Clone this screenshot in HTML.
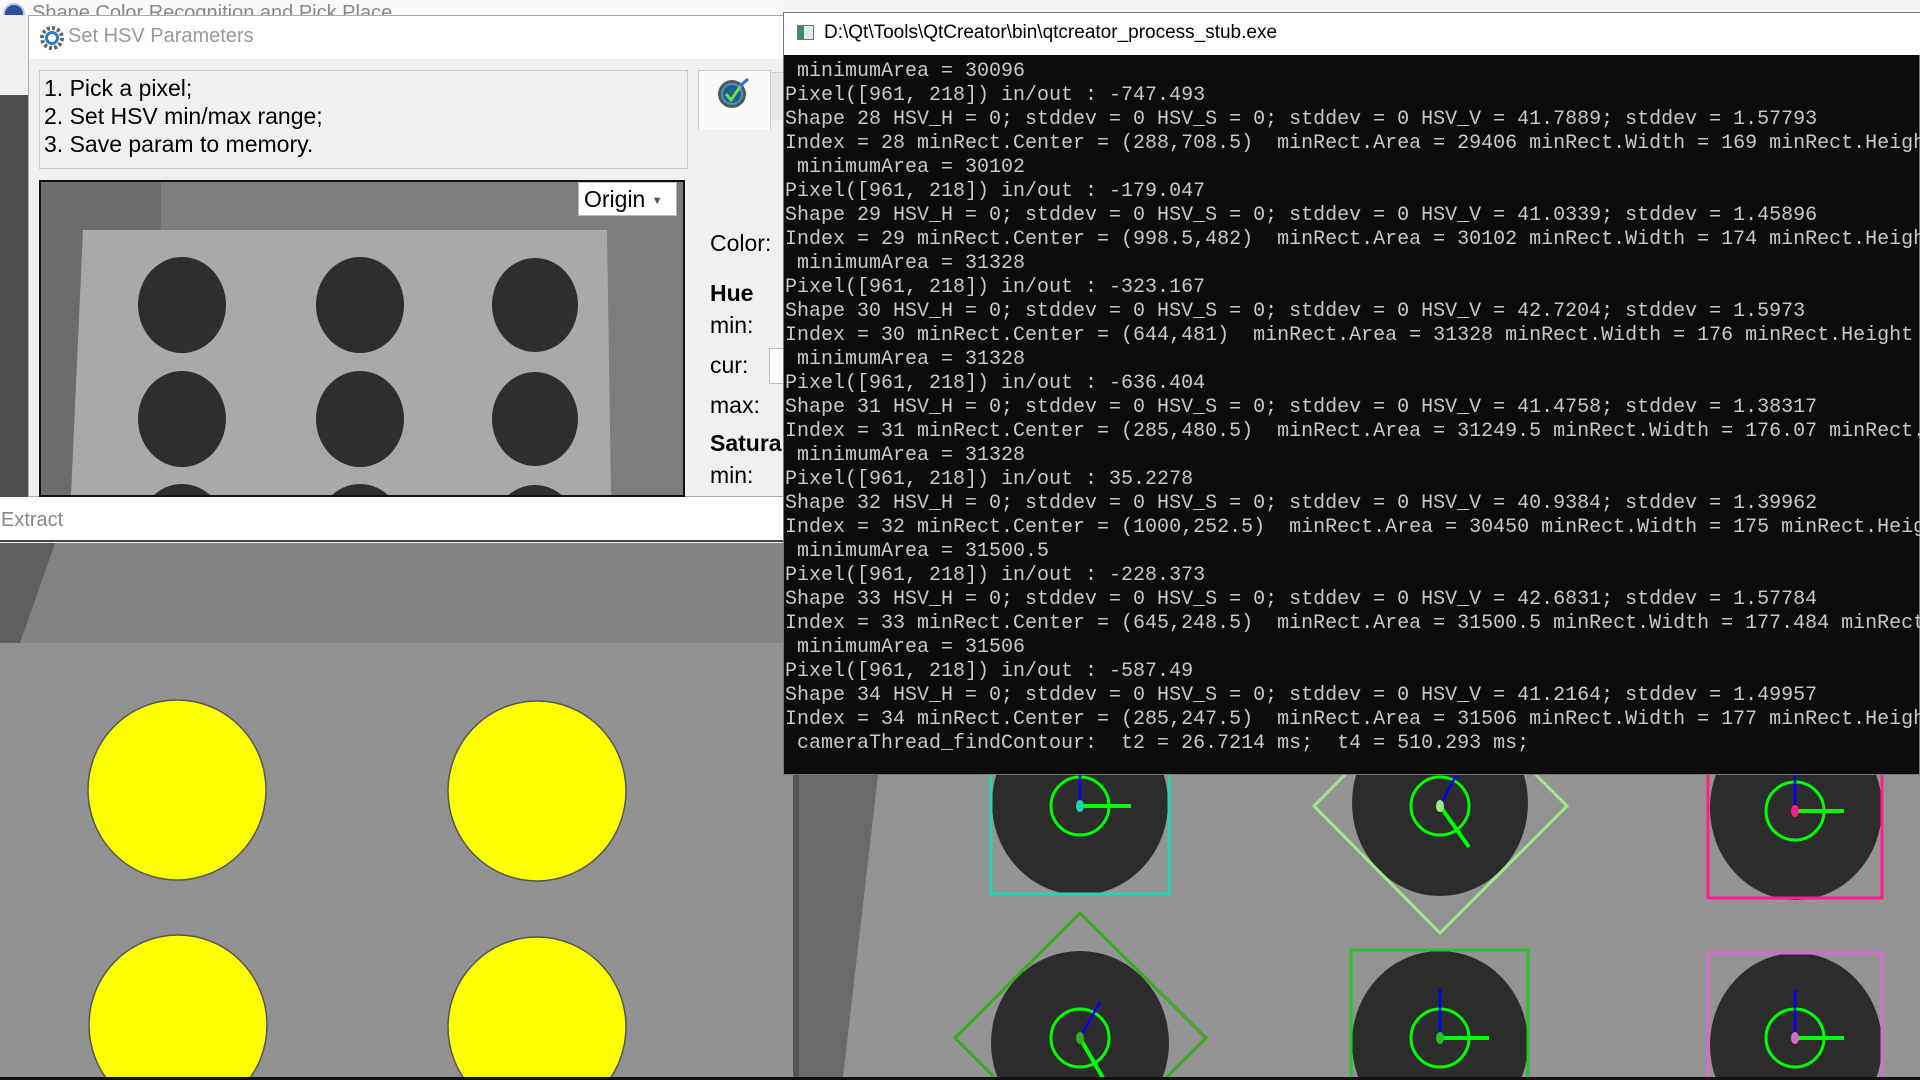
<!DOCTYPE html>
<html><head><meta charset="utf-8"><style>
*{margin:0;padding:0;box-sizing:border-box}
html,body{width:1920px;height:1080px;overflow:hidden}
body{position:relative;background:#f3f3f3;font-family:"Liberation Sans",sans-serif}
.abs{position:absolute}
.con{font-family:"Liberation Mono","Noto Sans CJK SC",monospace;font-size:20px;line-height:24px;color:#c8c8c8;white-space:pre}
</style></head><body>
<div class="abs" style="left:0;top:0;width:1920px;height:15px;background:#fafafa;overflow:hidden">
<div class="abs" style="left:3px;top:3px;width:22px;height:22px;border-radius:50%;background:#2b4f9e;border:2px solid #b9c7e8"></div>
<div class="abs" style="left:32px;top:3px;font-size:20px;color:#888;line-height:20px">Shape Color Recognition and Pick Place</div>
</div>
<div class="abs" style="left:0;top:15px;width:28px;height:80px;background:#f0f0f0"></div>
<div class="abs" style="left:0;top:95px;width:28px;height:402px;background:#4e4e4e"></div>

<div class="abs" style="left:28px;top:15px;width:756px;height:482px;background:#f0f0f0;border:1px solid #aaa;border-right:none"></div>
<div class="abs" style="left:29px;top:16px;width:755px;height:43px;background:#fff"></div>
<svg class="abs" style="left:40px;top:26px" width="24" height="24" viewBox="0 0 24 24"><circle cx="12" cy="12" r="10" fill="none" stroke="#666" stroke-width="4" stroke-dasharray="3 2.2"/><circle cx="12" cy="12" r="7" fill="#2a7ed0"/><circle cx="12" cy="12" r="4" fill="#fff"/></svg>
<div class="abs" style="left:68px;top:25px;font-size:20px;color:#999">Set HSV Parameters</div>
<div class="abs" style="left:39px;top:70px;width:649px;height:99px;border:1px solid #c8c8c8;background:#f0f0f0"></div>
<div class="abs" style="left:44px;top:74px;font-size:23px;line-height:28px;color:#000">1. Pick a pixel;<br>2. Set HSV min/max range;<br>3. Save param to memory.</div>
<div class="abs" style="left:39px;top:180px;width:646px;height:317px;border:2px solid #111;overflow:hidden;background:#6f6f6f">
<svg width="646" height="313" style="display:block">
<rect x="0" y="0" width="646" height="313" fill="#6c6c6c"/>
<rect x="120" y="0" width="526" height="313" fill="#7d7d7d"/>
<polygon points="42,48 566,48 570,313 30,313" fill="#a9a9a9"/>
<g fill="#2e2e2e">
<ellipse cx="141" cy="123" rx="44" ry="48"/><ellipse cx="319" cy="123" rx="44" ry="48"/><ellipse cx="494" cy="123" rx="43" ry="47"/>
<ellipse cx="141" cy="237" rx="44" ry="48"/><ellipse cx="319" cy="237" rx="44" ry="48"/><ellipse cx="494" cy="237" rx="43" ry="47"/>
<ellipse cx="141" cy="350" rx="44" ry="48"/><ellipse cx="319" cy="350" rx="44" ry="48"/><ellipse cx="494" cy="350" rx="43" ry="47"/>
</g></svg></div>
<div class="abs" style="left:578px;top:182px;width:99px;height:34px;background:#fff;border:1px solid #bbb;font-size:23px;line-height:32px;padding-left:5px">Origin <span style="font-size:11px;color:#555;vertical-align:middle">▼</span></div>
<div class="abs" style="left:698px;top:70px;width:73px;height:60px;background:#fafafa;border:1px solid #ccc;border-bottom:none"></div>
<div class="abs" style="left:771px;top:72px;width:13px;height:48px;background:#e8e8e8;border-top:1px solid #ccc"></div>
<svg class="abs" style="left:716px;top:76px" width="36" height="34" viewBox="0 0 36 34"><circle cx="16" cy="18" r="14" fill="#555"/><circle cx="16" cy="18" r="10" fill="#1e5f8a" stroke="#3a9ad0" stroke-width="2"/><path d="M10 18 L15 24 L26 8" stroke="#7cd64a" stroke-width="3" fill="none"/><path d="M24 10 L32 3" stroke="#2a72d8" stroke-width="3"/></svg>
<div class="abs" style="left:710px;top:230px;font-size:23px">Color:</div>
<div class="abs" style="left:710px;top:280px;font-size:23px;font-weight:bold">Hue</div>
<div class="abs" style="left:710px;top:312px;font-size:23px">min:</div>
<div class="abs" style="left:710px;top:352px;font-size:23px">cur:</div>
<div class="abs" style="left:710px;top:392px;font-size:23px">max:</div>
<div class="abs" style="left:710px;top:430px;font-size:23px;font-weight:bold">Satura</div>
<div class="abs" style="left:710px;top:462px;font-size:23px">min:</div>
<div class="abs" style="left:769px;top:348px;width:15px;height:36px;background:#fff;border:1px solid #bbb"></div>

<div class="abs" style="left:0;top:497px;width:784px;height:45px;background:#fff;border-bottom:2px solid #444"></div>
<div class="abs" style="left:1px;top:509px;font-size:20px;color:#888">Extract</div>
<svg class="abs" style="left:0;top:543px" width="793" height="534">
<rect width="793" height="534" fill="#919191"/>
<rect width="793" height="100" fill="#838383"/>
<polygon points="0,0 55,0 20,100 0,100" fill="#5e5e5e"/>
<g fill="#ffff00" stroke="#555" stroke-width="1.5">
<ellipse cx="177" cy="247" rx="89" ry="90"/><ellipse cx="537" cy="248" rx="89" ry="90"/>
<ellipse cx="178" cy="482" rx="89" ry="90"/><ellipse cx="537" cy="484" rx="89" ry="90"/>
</g></svg>

<svg class="abs" style="left:793px;top:775px" width="1127" height="302">
<rect width="1127" height="302" fill="#939393"/>
<polygon points="0,0 85,0 50,302 0,302" fill="#6a6a6a"/>
<rect x="0" y="0" width="6" height="302" fill="#555"/>
<g fill="#2c2c2c">
<ellipse cx="287" cy="28" rx="88" ry="92"/><ellipse cx="647" cy="28" rx="88" ry="93"/><ellipse cx="1003" cy="33" rx="86" ry="92"/>
<ellipse cx="287" cy="268" rx="89" ry="92"/><ellipse cx="647" cy="268" rx="88" ry="92"/><ellipse cx="1003" cy="270" rx="86" ry="92"/>
</g>
<rect x="198" y="-10" width="178" height="129" fill="none" stroke="#1fd4b4" stroke-width="3"/>
<polygon points="647,-96 774,31 647,158 521,31" fill="none" stroke="#a2e88a" stroke-width="3"/>
<rect x="915" y="-10" width="174" height="133" fill="none" stroke="#ff1f8c" stroke-width="3"/>
<polygon points="287,138 413,263 287,388 162,263" fill="none" stroke="#3aa820" stroke-width="3"/>
<rect x="558" y="175" width="177" height="140" fill="none" stroke="#2cbf2c" stroke-width="3"/>
<rect x="915" y="178" width="174" height="140" fill="none" stroke="#d46ccc" stroke-width="3"/>
<g fill="none" stroke="#00ff00" stroke-width="3">
<circle cx="287" cy="31" r="29"/><circle cx="647" cy="31" r="29"/><circle cx="1002" cy="36" r="29"/>
<circle cx="287" cy="263" r="29"/><circle cx="647" cy="263" r="29"/><circle cx="1002" cy="263" r="29"/>
</g>
<g stroke="#0000ff" stroke-width="2.5">
<line x1="287" y1="31" x2="287" y2="-5"/><line x1="647" y1="31" x2="666" y2="-5"/><line x1="1002" y1="36" x2="1002" y2="-5"/>
<line x1="287" y1="263" x2="307" y2="227"/><line x1="647" y1="263" x2="647" y2="214"/><line x1="1002" y1="263" x2="1002" y2="215"/>
</g>
<g stroke="#00ff00" stroke-width="4">
<line x1="287" y1="31" x2="338" y2="31"/><line x1="647" y1="31" x2="676" y2="72"/><line x1="1002" y1="36" x2="1051" y2="36"/>
<line x1="287" y1="263" x2="310" y2="303"/><line x1="647" y1="263" x2="696" y2="263"/><line x1="1002" y1="263" x2="1051" y2="263"/>
</g>
<ellipse cx="287" cy="31" rx="4" ry="6" fill="#1fd4b4"/><ellipse cx="647" cy="31" rx="4" ry="6" fill="#a2e88a"/><ellipse cx="1002" cy="36" rx="4" ry="6" fill="#ff1f8c"/>
<ellipse cx="287" cy="263" rx="4" ry="6" fill="#3aa820"/><ellipse cx="647" cy="263" rx="4" ry="6" fill="#2cbf2c"/><ellipse cx="1002" cy="263" rx="4" ry="6" fill="#d46ccc"/>
</svg>
<div class="abs" style="left:0;top:1077px;width:1920px;height:3px;background:#111"></div>

<div class="abs" style="left:784px;top:0;width:1136px;height:12px;background:#f5f5f5"></div>
<div class="abs" style="left:783px;top:12px;width:1137px;height:763px;background:#0c0c0c;border:1px solid #777"></div>
<div class="abs" style="left:784px;top:13px;width:1136px;height:42px;background:#fff"></div>
<div class="abs" style="left:797px;top:25px;width:17px;height:15px;border:1px solid #777;background:linear-gradient(90deg,#3a8f5a 0 40%,#dfe8f0 40%)"></div>
<div class="abs" style="left:824px;top:22px;font-size:19px;color:#000">D:\Qt\Tools\QtCreator\bin\qtcreator_process_stub.exe</div>
<div class="abs con" style="left:785px;top:60px;width:1135px;height:700px;overflow:hidden"> minimumArea = 30096
Pixel([961, 218]) in/out : -747.493
Shape 28 HSV_H = 0; stddev = 0 HSV_S = 0; stddev = 0 HSV_V = 41.7889; stddev = 1.57793
Index = 28 minRect.Center = (288,708.5)  minRect.Area = 29406 minRect.Width = 169 minRect.Heigh
 minimumArea = 30102
Pixel([961, 218]) in/out : -179.047
Shape 29 HSV_H = 0; stddev = 0 HSV_S = 0; stddev = 0 HSV_V = 41.0339; stddev = 1.45896
Index = 29 minRect.Center = (998.5,482)  minRect.Area = 30102 minRect.Width = 174 minRect.Heigh
 minimumArea = 31328
Pixel([961, 218]) in/out : -323.167
Shape 30 HSV_H = 0; stddev = 0 HSV_S = 0; stddev = 0 HSV_V = 42.7204; stddev = 1.5973
Index = 30 minRect.Center = (644,481)  minRect.Area = 31328 minRect.Width = 176 minRect.Height
 minimumArea = 31328
Pixel([961, 218]) in/out : -636.404
Shape 31 HSV_H = 0; stddev = 0 HSV_S = 0; stddev = 0 HSV_V = 41.4758; stddev = 1.38317
Index = 31 minRect.Center = (285,480.5)  minRect.Area = 31249.5 minRect.Width = 176.07 minRect.
 minimumArea = 31328
Pixel([961, 218]) in/out : 35.2278
Shape 32 HSV_H = 0; stddev = 0 HSV_S = 0; stddev = 0 HSV_V = 40.9384; stddev = 1.39962
Index = 32 minRect.Center = (1000,252.5)  minRect.Area = 30450 minRect.Width = 175 minRect.Heig
 minimumArea = 31500.5
Pixel([961, 218]) in/out : -228.373
Shape 33 HSV_H = 0; stddev = 0 HSV_S = 0; stddev = 0 HSV_V = 42.6831; stddev = 1.57784
Index = 33 minRect.Center = (645,248.5)  minRect.Area = 31500.5 minRect.Width = 177.484 minRect
 minimumArea = 31506
Pixel([961, 218]) in/out : -587.49
Shape 34 HSV_H = 0; stddev = 0 HSV_S = 0; stddev = 0 HSV_V = 41.2164; stddev = 1.49957
Index = 34 minRect.Center = (285,247.5)  minRect.Area = 31506 minRect.Width = 177 minRect.Heigh
 cameraThread_findContour:  t2 = 26.7214 ms;  t4 = 510.293 ms;</div>
</body></html>
